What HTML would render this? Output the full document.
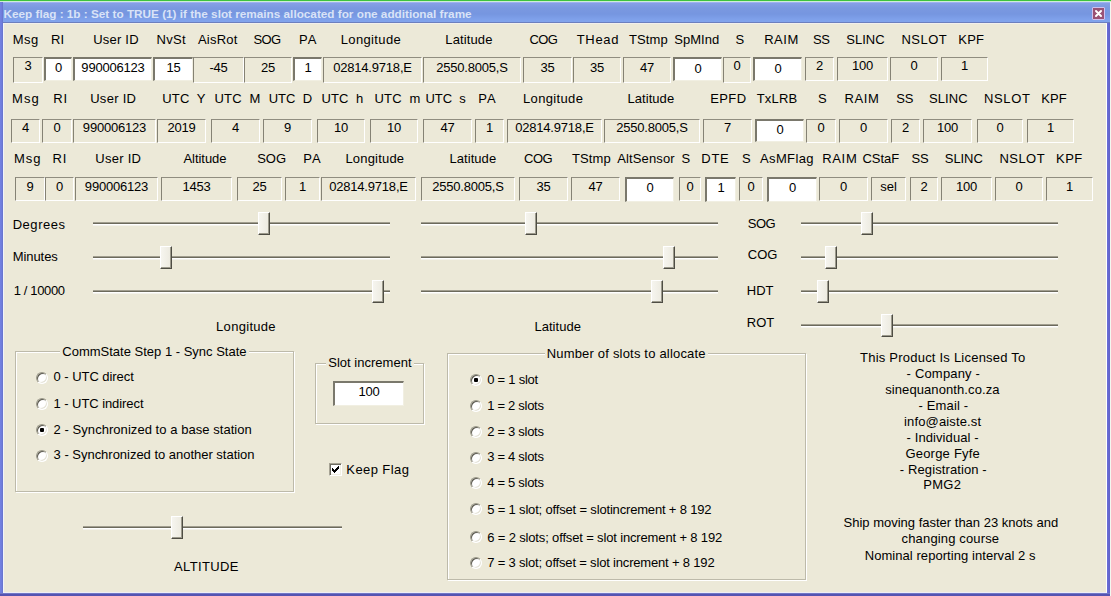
<!DOCTYPE html>
<html><head><meta charset="utf-8"><style>
*{box-sizing:border-box}
html,body{margin:0;padding:0}
body{width:1111px;height:596px;overflow:hidden;position:relative;background:#ECE9D8;font-family:"Liberation Sans",sans-serif;font-size:13px;color:#000}
#green{position:absolute;left:0;top:0;width:1111px;height:2px;background:#3DC23D;border-bottom:1px solid #CDEFD3}
#frame{position:absolute;left:0;top:2px;width:1110px;height:594px;background:linear-gradient(90deg,#7482E2 0px,#6E7CDA 2px,#6470C8 3px);}
#fbot{position:absolute;left:0;top:593px;width:1110px;height:3px;background:linear-gradient(#7078C6 0px,#7078C6 1px,#5454B2 1px)}
#fright{position:absolute;left:1107px;top:23px;width:3px;height:573px;background:linear-gradient(90deg,#6A6ED8,#5F62C8)}
#title{position:absolute;left:3px;top:2px;width:1107px;height:21px;background:linear-gradient(#9DB1F2 0px,#9DB1F2 1px,#86A0E6 1px,#7A98E0 6px,#7696E0 12px,#7EA0EA 17px,#82A4EC 20px,#6C7FBE 20px)}
#ttext{position:absolute;left:0.5px;top:5px;font-weight:bold;font-size:11.75px;line-height:14px;color:#D9E3F7;white-space:nowrap}
#close{position:absolute;left:1092px;top:7px;width:13px;height:13px;background:#9A5275;border:1px solid #CFC0EE;border-radius:1px}
#client{position:absolute;left:3px;top:23px;width:1104px;height:570px;background:#ECE9D8;border-top:1px solid #F2F0EC;border-left:1px solid #F2F4FA;border-right:1px solid #fff;border-bottom:1px solid #EEEEF6}
#rgreen{position:absolute;left:1110px;top:2px;width:1px;height:594px;background:#F2F8F0}
.lb,.gt{position:absolute;white-space:nowrap;line-height:15px;height:15px}
.lb.c{width:300px;text-align:center}
.gt{background:#ECE9D8;padding:0 2px;margin-left:-2px}
.st,.ed{position:absolute}
.st{border-top:1px solid #908D80;border-left:1px solid #858274;border-right:1px solid #fff;border-bottom:1px solid #fff}
.ed{background:#fff;border-top:2px solid #7A786C;border-left:2px solid #7A786C;border-right:1px solid #F1EFE2;border-bottom:1px solid #F1EFE2}
.st span,.ed span{position:absolute;left:0;right:0;text-align:center;line-height:15px;white-space:nowrap}
.n{letter-spacing:-0.2px}
.tr{position:absolute;height:3px;background:#6C6A5C;border-top:1px solid #A19E8F;border-bottom:1px solid #fff;box-shadow:0 1px 0 #F4F3EC}
.th{position:absolute;width:12px;height:23px;background:linear-gradient(90deg,#F6F5EF,#ECEADF);border-left:1px solid #fff;border-top:1px solid #fff;border-right:1px solid #4E4D44;border-bottom:1px solid #4E4D44;box-shadow:inset -1px -1px 0 #9C9A8C}
.rd{position:absolute;width:12px;height:12px;border-radius:50%;background:#fff;border:1px solid;border-color:#9A9888 #FFFFFF #FFFFFF #9A9888;box-shadow:inset 1px 1px 0 #5C5A50,inset -1px -1px 0 #E4E2D6}
.rd i{position:absolute;left:3px;top:3px;width:4px;height:4px;border-radius:1px;background:#000}
.gb{position:absolute;border:1px solid #BDBAAA;box-shadow:inset 1px 1px 0 #fff,1px 1px 0 #fff}
.cb{position:absolute;width:13px;height:13px;background:#fff;border:1px solid;border-color:#A6A394 #FFFFFF #FFFFFF #A6A394;box-shadow:inset 1px 1px 0 #6D6B5F,inset -1px -1px 0 #F1EFE2}
.cb svg{position:absolute;left:-1px;top:-1px}
</style></head><body>
<div id="green"></div>
<div id="frame"></div><div id="fright"></div><div id="fbot"></div>
<div id="title"><div id="ttext">Keep flag : 1b : Set to TRUE (1) if the slot remains allocated for one additional frame</div></div>
<div id="close"><svg width="11" height="11" viewBox="0 0 11 11" style="position:absolute;left:0;top:0"><path d="M3 3 L8 8 M8 3 L3 8" stroke="#fff" stroke-width="2" stroke-linecap="round"/></svg></div>
<div id="rgreen"></div>
<div id="client"></div>
<div class="lb" style="left:12.80px;top:31.5px;letter-spacing:0.39px">Msg</div>
<div class="lb" style="left:50.90px;top:31.5px;letter-spacing:0.11px">RI</div>
<div class="lb" style="left:93.20px;top:31.5px;letter-spacing:0.22px">User ID</div>
<div class="lb" style="left:156.60px;top:31.5px;letter-spacing:0.28px">NvSt</div>
<div class="lb" style="left:198.00px;top:31.5px;letter-spacing:0.20px">AisRot</div>
<div class="lb" style="left:253.40px;top:31.5px;letter-spacing:-0.59px">SOG</div>
<div class="lb" style="left:299.00px;top:31.5px;letter-spacing:1.00px">PA</div>
<div class="lb" style="left:340.70px;top:31.5px;letter-spacing:0.37px">Longitude</div>
<div class="lb" style="left:445.30px;top:31.5px;letter-spacing:0.12px">Latitude</div>
<div class="lb" style="left:529.60px;top:31.5px;letter-spacing:-0.65px">COG</div>
<div class="lb" style="left:576.70px;top:31.5px;letter-spacing:0.70px">THead</div>
<div class="lb" style="left:628.90px;top:31.5px;letter-spacing:0.11px">TStmp</div>
<div class="lb" style="left:674.20px;top:31.5px;letter-spacing:0.05px">SpMInd</div>
<div class="lb" style="left:735.50px;top:31.5px">S</div>
<div class="lb" style="left:764.20px;top:31.5px;letter-spacing:0.54px">RAIM</div>
<div class="lb" style="left:813.00px;top:31.5px;letter-spacing:-0.47px">SS</div>
<div class="lb" style="left:846.30px;top:31.5px">SLINC</div>
<div class="lb" style="left:901.50px;top:31.5px;letter-spacing:0.45px">NSLOT</div>
<div class="lb" style="left:958.30px;top:31.5px;letter-spacing:0.18px">KPF</div>
<div class="st" style="left:13px;top:57px;width:30px;height:26px"><span class="n" style="top:0.3px">3</span></div>
<div class="ed" style="left:44px;top:57px;width:28px;height:24px"><span class="n" style="top:1.2px">0</span></div>
<div class="ed" style="left:73px;top:57px;width:79px;height:24px"><span class="n" style="top:1.2px">990006123</span></div>
<div class="ed" style="left:153px;top:57px;width:40px;height:24px"><span class="n" style="top:1.2px">15</span></div>
<div class="st" style="left:193px;top:57px;width:51px;height:26px"><span class="n" style="top:2.2px">-45</span></div>
<div class="st" style="left:244px;top:57px;width:48px;height:26px"><span class="n" style="top:2.2px">25</span></div>
<div class="ed" style="left:293px;top:57px;width:29px;height:24px"><span class="n" style="top:1.2px">1</span></div>
<div class="st" style="left:323px;top:57px;width:99px;height:26px"><span class="n" style="top:2.2px">02814.9718,E</span></div>
<div class="st" style="left:423px;top:57px;width:98px;height:26px"><span class="n" style="top:2.2px">2550.8005,S</span></div>
<div class="st" style="left:523px;top:57px;width:49px;height:26px"><span class="n" style="top:2.2px">35</span></div>
<div class="st" style="left:573px;top:57px;width:48px;height:26px"><span class="n" style="top:2.2px">35</span></div>
<div class="st" style="left:623px;top:57px;width:48px;height:26px"><span class="n" style="top:2.2px">47</span></div>
<div class="ed" style="left:673px;top:57px;width:49px;height:24px"><span class="n" style="top:1.5px">0</span></div>
<div class="st" style="left:723px;top:57px;width:28px;height:26px"><span class="n" style="top:0.3px">0</span></div>
<div class="ed" style="left:753px;top:57px;width:49px;height:24px"><span class="n" style="top:1.5px">0</span></div>
<div class="st" style="left:805px;top:57px;width:29px;height:24px"><span class="n" style="top:0.3px">2</span></div>
<div class="st" style="left:837px;top:57px;width:51px;height:24px"><span class="n" style="top:0.3px">100</span></div>
<div class="st" style="left:890px;top:57px;width:48px;height:24px"><span class="n" style="top:0.3px">0</span></div>
<div class="st" style="left:941px;top:57px;width:47px;height:24px"><span class="n" style="top:0.3px">1</span></div>
<div class="lb" style="left:12.10px;top:91.3px;letter-spacing:1.00px">Msg</div>
<div class="lb" style="left:53.20px;top:91.3px;letter-spacing:1.00px">RI</div>
<div class="lb" style="left:90.20px;top:91.3px;letter-spacing:0.29px">User ID</div>
<div class="lb" style="left:162.30px;top:91.3px;letter-spacing:0.17px">UTC&nbsp; Y</div>
<div class="lb" style="left:214.50px;top:91.3px;letter-spacing:0.23px">UTC&nbsp; M</div>
<div class="lb" style="left:268.70px;top:91.3px">UTC&nbsp; D</div>
<div class="lb" style="left:321.60px;top:91.3px;letter-spacing:0.07px">UTC&nbsp; h</div>
<div class="lb" style="left:374.50px;top:91.3px;letter-spacing:0.19px">UTC&nbsp; m</div>
<div class="lb" style="left:425.40px;top:91.3px;letter-spacing:-0.03px">UTC&nbsp; s</div>
<div class="lb" style="left:478.30px;top:91.3px;letter-spacing:1.00px">PA</div>
<div class="lb" style="left:523.00px;top:91.3px;letter-spacing:0.35px">Longitude</div>
<div class="lb" style="left:627.50px;top:91.3px;letter-spacing:0.05px">Latitude</div>
<div class="lb" style="left:710.20px;top:91.3px;letter-spacing:0.41px">EPFD</div>
<div class="lb" style="left:756.70px;top:91.3px;letter-spacing:0.19px">TxLRB</div>
<div class="lb" style="left:818.00px;top:91.3px">S</div>
<div class="lb" style="left:844.50px;top:91.3px;letter-spacing:0.61px">RAIM</div>
<div class="lb" style="left:896.30px;top:91.3px;letter-spacing:-0.27px">SS</div>
<div class="lb" style="left:929.00px;top:91.3px;letter-spacing:0.10px">SLINC</div>
<div class="lb" style="left:984.00px;top:91.3px;letter-spacing:0.65px">NSLOT</div>
<div class="lb" style="left:1041.20px;top:91.3px;letter-spacing:0.08px">KPF</div>
<div class="st" style="left:11px;top:119px;width:29px;height:24px"><span class="n" style="top:0.3px">4</span></div>
<div class="st" style="left:42px;top:119px;width:30px;height:24px"><span class="n" style="top:0.3px">0</span></div>
<div class="st" style="left:73px;top:119px;width:83px;height:24px"><span class="n" style="top:0.3px">990006123</span></div>
<div class="st" style="left:157px;top:119px;width:49px;height:24px"><span class="n" style="top:0.3px">2019</span></div>
<div class="st" style="left:211px;top:119px;width:49px;height:24px"><span class="n" style="top:0.3px">4</span></div>
<div class="st" style="left:263px;top:119px;width:49px;height:24px"><span class="n" style="top:0.3px">9</span></div>
<div class="st" style="left:317px;top:119px;width:48px;height:24px"><span class="n" style="top:0.3px">10</span></div>
<div class="st" style="left:370px;top:119px;width:48px;height:24px"><span class="n" style="top:0.3px">10</span></div>
<div class="st" style="left:423px;top:119px;width:49px;height:24px"><span class="n" style="top:0.3px">47</span></div>
<div class="st" style="left:475px;top:119px;width:29px;height:24px"><span class="n" style="top:0.3px">1</span></div>
<div class="st" style="left:507px;top:119px;width:95px;height:24px"><span class="n" style="top:0.3px">02814.9718,E</span></div>
<div class="st" style="left:604px;top:119px;width:96px;height:24px"><span class="n" style="top:0.3px">2550.8005,S</span></div>
<div class="st" style="left:703px;top:119px;width:49px;height:24px"><span class="n" style="top:0.3px">7</span></div>
<div class="ed" style="left:755px;top:119px;width:49px;height:23px"><span class="n" style="top:1.0px">0</span></div>
<div class="st" style="left:806px;top:119px;width:30px;height:24px"><span class="n" style="top:0.0px">0</span></div>
<div class="st" style="left:839px;top:119px;width:49px;height:24px"><span class="n" style="top:0.0px">0</span></div>
<div class="st" style="left:891px;top:119px;width:29px;height:24px"><span class="n" style="top:0.0px">2</span></div>
<div class="st" style="left:923px;top:119px;width:49px;height:24px"><span class="n" style="top:0.0px">100</span></div>
<div class="st" style="left:977px;top:119px;width:46px;height:24px"><span class="n" style="top:0.0px">0</span></div>
<div class="st" style="left:1027px;top:119px;width:47px;height:24px"><span class="n" style="top:0.0px">1</span></div>
<div class="lb" style="left:14.10px;top:151.3px;letter-spacing:0.94px">Msg</div>
<div class="lb" style="left:52.40px;top:151.3px;letter-spacing:1.00px">RI</div>
<div class="lb" style="left:95.30px;top:151.3px;letter-spacing:0.27px">User ID</div>
<div class="lb" style="left:183.50px;top:151.3px;letter-spacing:-0.05px">Altitude</div>
<div class="lb" style="left:257.20px;top:151.3px">SOG</div>
<div class="lb" style="left:303.30px;top:151.3px;letter-spacing:1.00px">PA</div>
<div class="lb" style="left:345.40px;top:151.3px;letter-spacing:0.20px">Longitude</div>
<div class="lb" style="left:449.50px;top:151.3px;letter-spacing:0.05px">Latitude</div>
<div class="lb" style="left:524.10px;top:151.3px;letter-spacing:-0.50px">COG</div>
<div class="lb" style="left:572.00px;top:151.3px;letter-spacing:0.11px">TStmp</div>
<div class="lb" style="left:617.30px;top:151.3px;letter-spacing:0.12px">AltSensor</div>
<div class="lb" style="left:681.60px;top:151.3px">S</div>
<div class="lb" style="left:701.30px;top:151.3px;letter-spacing:0.69px">DTE</div>
<div class="lb" style="left:742.10px;top:151.3px">S</div>
<div class="lb" style="left:760.00px;top:151.3px;letter-spacing:0.36px">AsMFlag</div>
<div class="lb" style="left:822.20px;top:151.3px;letter-spacing:0.68px">RAIM</div>
<div class="lb" style="left:862.50px;top:151.3px;letter-spacing:-0.05px">CStaF</div>
<div class="lb" style="left:911.50px;top:151.3px;letter-spacing:-0.07px">SS</div>
<div class="lb" style="left:944.80px;top:151.3px;letter-spacing:-0.08px">SLINC</div>
<div class="lb" style="left:999.40px;top:151.3px;letter-spacing:0.47px">NSLOT</div>
<div class="lb" style="left:1056.00px;top:151.3px;letter-spacing:0.48px">KPF</div>
<div class="st" style="left:15px;top:177px;width:30px;height:24px"><span class="n" style="top:0.5px">9</span></div>
<div class="st" style="left:45px;top:177px;width:29px;height:24px"><span class="n" style="top:0.5px">0</span></div>
<div class="st" style="left:75px;top:177px;width:83px;height:24px"><span class="n" style="top:0.5px">990006123</span></div>
<div class="st" style="left:161px;top:177px;width:71px;height:24px"><span class="n" style="top:0.5px">1453</span></div>
<div class="st" style="left:237px;top:177px;width:45px;height:24px"><span class="n" style="top:0.5px">25</span></div>
<div class="st" style="left:285px;top:177px;width:35px;height:24px"><span class="n" style="top:0.5px">1</span></div>
<div class="st" style="left:321px;top:177px;width:95px;height:24px"><span class="n" style="top:0.5px">02814.9718,E</span></div>
<div class="st" style="left:421px;top:177px;width:94px;height:24px"><span class="n" style="top:0.5px">2550.8005,S</span></div>
<div class="st" style="left:519px;top:177px;width:49px;height:24px"><span class="n" style="top:0.5px">35</span></div>
<div class="st" style="left:571px;top:177px;width:49px;height:24px"><span class="n" style="top:0.5px">47</span></div>
<div class="ed" style="left:625px;top:177px;width:49px;height:25px"><span class="n" style="top:0.8px">0</span></div>
<div class="st" style="left:679px;top:177px;width:22px;height:24px"><span class="n" style="top:0.5px">0</span></div>
<div class="ed" style="left:705px;top:177px;width:31px;height:25px"><span class="n" style="top:0.8px">1</span></div>
<div class="st" style="left:739px;top:177px;width:24px;height:24px"><span class="n" style="top:0.5px">0</span></div>
<div class="ed" style="left:767px;top:177px;width:50px;height:25px"><span class="n" style="top:0.8px">0</span></div>
<div class="st" style="left:819px;top:177px;width:49px;height:24px"><span class="n" style="top:0.5px">0</span></div>
<div class="st" style="left:871px;top:177px;width:35px;height:24px"><span class="" style="top:0.5px">sel</span></div>
<div class="st" style="left:910px;top:177px;width:28px;height:24px"><span class="n" style="top:0.5px">2</span></div>
<div class="st" style="left:941px;top:177px;width:51px;height:24px"><span class="n" style="top:0.5px">100</span></div>
<div class="st" style="left:995px;top:177px;width:48px;height:24px"><span class="n" style="top:0.5px">0</span></div>
<div class="st" style="left:1046px;top:177px;width:47px;height:24px"><span class="n" style="top:0.5px">1</span></div>
<div class="lb" style="left:12.70px;top:216.8px;letter-spacing:0.53px">Degrees</div>
<div class="lb" style="left:12.70px;top:249.2px;letter-spacing:-0.07px">Minutes</div>
<div class="lb" style="left:13.70px;top:282.7px;letter-spacing:-0.36px">1 / 10000</div>
<div class="tr" style="left:93px;top:222px;width:297px"></div>
<div class="th" style="left:258px;top:212px"></div>
<div class="tr" style="left:93px;top:256px;width:297px"></div>
<div class="th" style="left:160px;top:246px"></div>
<div class="tr" style="left:93px;top:290px;width:297px"></div>
<div class="th" style="left:372px;top:280px"></div>
<div class="tr" style="left:421px;top:222px;width:297px"></div>
<div class="th" style="left:525px;top:212px"></div>
<div class="tr" style="left:421px;top:256px;width:297px"></div>
<div class="th" style="left:663px;top:246px"></div>
<div class="tr" style="left:421px;top:290px;width:297px"></div>
<div class="th" style="left:651px;top:280px"></div>
<div class="lb" style="left:216.10px;top:319.4px;letter-spacing:0.30px">Longitude</div>
<div class="lb" style="left:534.40px;top:318.5px;letter-spacing:0.05px">Latitude</div>
<div class="lb" style="left:747.80px;top:215.5px;letter-spacing:-0.59px">SOG</div>
<div class="lb" style="left:747.80px;top:247.2px">COG</div>
<div class="lb" style="left:746.80px;top:282.9px">HDT</div>
<div class="lb" style="left:746.80px;top:315.3px">ROT</div>
<div class="tr" style="left:801px;top:222px;width:257px"></div>
<div class="th" style="left:861px;top:212px"></div>
<div class="tr" style="left:801px;top:256px;width:257px"></div>
<div class="th" style="left:825px;top:246px"></div>
<div class="tr" style="left:801px;top:290px;width:257px"></div>
<div class="th" style="left:817px;top:280px"></div>
<div class="tr" style="left:801px;top:324px;width:257px"></div>
<div class="th" style="left:881px;top:314px"></div>
<div class="tr" style="left:83px;top:526px;width:259px"></div>
<div class="th" style="left:171px;top:516px"></div>
<div class="lb" style="left:174.00px;top:559.0px;letter-spacing:0.37px">ALTITUDE</div>
<div class="gb" style="left:15px;top:351px;width:279px;height:141px"></div>
<div class="gt" style="left:62.30px;top:343.5px">CommState Step 1 - Sync State</div>
<div class="rd" style="left:36px;top:372px"></div>
<div class="lb" style="left:53.60px;top:369.3px;letter-spacing:-0.05px">0 - UTC direct</div>
<div class="rd" style="left:36px;top:398px"></div>
<div class="lb" style="left:53.60px;top:395.5px;letter-spacing:-0.07px">1 - UTC indirect</div>
<div class="rd" style="left:36px;top:424px"><i></i></div>
<div class="lb" style="left:53.60px;top:421.7px;letter-spacing:0.05px">2 - Synchronized to a base station</div>
<div class="rd" style="left:36px;top:450px"></div>
<div class="lb" style="left:53.60px;top:447.2px;letter-spacing:-0.02px">3 - Synchronized to another station</div>
<div class="gb" style="left:315px;top:363px;width:109px;height:61px"></div>
<div class="gt" style="left:328.20px;top:355.1px;letter-spacing:0.02px">Slot increment</div>
<div class="ed" style="left:333px;top:381px;width:71px;height:25px"><span class="n" style="top:1.3px">100</span></div>
<div class="cb" style="left:329px;top:463px"><svg width="13" height="13" viewBox="0 0 13 13" shape-rendering="crispEdges"><path fill="#000" d="M9 3h1v1h-1zM8 4h2v1h-2zM3 5h1v1h-1zM7 5h3v1h-3zM3 6h2v1h-2zM6 6h3v1h-3zM3 7h5v1h-5zM4 8h3v1h-3zM5 9h1v1h-1z"/></svg></div>
<div class="lb" style="left:346.30px;top:461.5px;letter-spacing:0.42px">Keep Flag</div>
<div class="gb" style="left:447px;top:353px;width:359px;height:227px"></div>
<div class="gt" style="left:546.70px;top:346.0px;letter-spacing:0.19px">Number of slots to allocate</div>
<div class="rd" style="left:470px;top:374px"><i></i></div>
<div class="lb" style="left:487.20px;top:372.1px;letter-spacing:-0.23px">0 = 1 slot</div>
<div class="rd" style="left:470px;top:400px"></div>
<div class="lb" style="left:487.20px;top:397.8px;letter-spacing:-0.29px">1 = 2 slots</div>
<div class="rd" style="left:470px;top:426px"></div>
<div class="lb" style="left:487.20px;top:423.7px;letter-spacing:-0.29px">2 = 3 slots</div>
<div class="rd" style="left:470px;top:452px"></div>
<div class="lb" style="left:487.20px;top:449.1px;letter-spacing:-0.29px">3 = 4 slots</div>
<div class="rd" style="left:470px;top:477px"></div>
<div class="lb" style="left:487.20px;top:475.1px;letter-spacing:-0.29px">4 = 5 slots</div>
<div class="rd" style="left:470px;top:503px"></div>
<div class="lb" style="left:487.20px;top:501.8px;letter-spacing:-0.17px">5 = 1 slot; offset = slotincrement + 8 192</div>
<div class="rd" style="left:470px;top:531px"></div>
<div class="lb" style="left:487.20px;top:529.5px;letter-spacing:-0.15px">6 = 2 slots; offset = slot increment + 8 192</div>
<div class="rd" style="left:470px;top:557px"></div>
<div class="lb" style="left:487.20px;top:555.2px;letter-spacing:-0.18px">7 = 3 slot; offset = slot increment + 8 192</div>
<div class="lb" style="left:860.10px;top:349.5px;letter-spacing:0.22px">This Product Is Licensed To</div>
<div class="lb" style="left:906.60px;top:365.5px;letter-spacing:0.18px">- Company -</div>
<div class="lb" style="left:885.20px;top:381.5px;letter-spacing:0.09px">sinequanonth.co.za</div>
<div class="lb" style="left:918.40px;top:397.5px;letter-spacing:0.17px">- Email -</div>
<div class="lb" style="left:904.10px;top:413.5px;letter-spacing:0.13px">info@aiste.st</div>
<div class="lb" style="left:906.60px;top:429.5px;letter-spacing:0.09px">- Individual -</div>
<div class="lb" style="left:905.40px;top:445.5px;letter-spacing:0.22px">George Fyfe</div>
<div class="lb" style="left:899.80px;top:461.5px;letter-spacing:0.11px">- Registration -</div>
<div class="lb" style="left:923.20px;top:477.4px;letter-spacing:0.30px">PMG2</div>
<div class="lb" style="left:843.50px;top:515.1px">Ship moving faster than 23 knots and</div>
<div class="lb" style="left:901.60px;top:531.3px;letter-spacing:0.15px">changing course</div>
<div class="lb" style="left:864.70px;top:547.5px;letter-spacing:0.06px">Nominal reporting interval 2 s</div>
</body></html>
